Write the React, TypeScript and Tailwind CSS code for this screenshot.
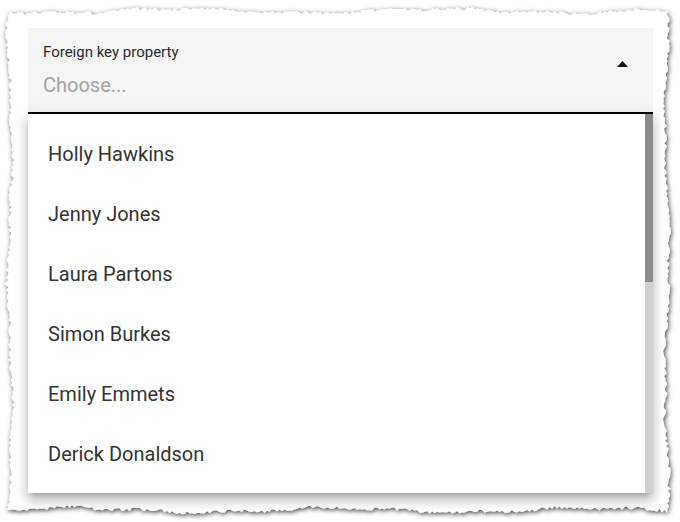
import { useMemo } from "react";

const people = [
  "Holly Hawkins",
  "Jenny Jones",
  "Laura Partons",
  "Simon Burkes",
  "Emily Emmets",
  "Derick Donaldson",
];

// seeded random so the torn edge is the same on every render
function makeRandom(seed: number) {
  let s = seed;
  return () => {
    s = (s * 16807) % 2147483647;
    return (s - 1) / 2147483646;
  };
}

function tornPath(left: number, top: number, right: number, bottom: number) {
  const rnd = makeRandom(42);
  const pts: string[] = [];
  const jit = (i: number, phase: number) =>
    Math.sin(i / 41 + phase) * 2.2 +
    Math.sin(i / 13 + phase * 2) * 1 +
    (rnd() - 0.5) * 3.4;

  for (let x = left; x <= right; x += 2.5) {
    pts.push(`${x.toFixed(1)},${(top + jit(x, 0.3)).toFixed(1)}`);
  }
  for (let y = top; y <= bottom; y += 2.5) {
    pts.push(`${(right + jit(y, 1.7)).toFixed(1)},${y.toFixed(1)}`);
  }
  for (let x = right; x >= left; x -= 2.5) {
    pts.push(`${x.toFixed(1)},${(bottom + jit(x, 2.9)).toFixed(1)}`);
  }
  for (let y = bottom; y >= top; y -= 2.5) {
    pts.push(`${(left + jit(y, 4.1)).toFixed(1)},${y.toFixed(1)}`);
  }
  return "M" + pts.join(" L") + " Z";
}

function TornPaper() {
  const d = useMemo(() => tornPath(10, 11, 667, 510), []);
  return (
    <svg
      className="absolute inset-0 pointer-events-none"
      width="680"
      height="522"
      viewBox="0 0 680 522"
    >
      <defs>
        <filter id="tornShadow" x="-5%" y="-5%" width="110%" height="110%">
          <feDropShadow dx="1" dy="1.5" stdDeviation="2.6" floodColor="#000" floodOpacity="0.75" />
        </filter>
      </defs>
      <path d={d} fill="#fff" filter="url(#tornShadow)" />
    </svg>
  );
}

export default function App() {
  return (
    <div
      className="relative w-[680px] h-[522px] overflow-hidden bg-white"
      style={{ fontFamily: "Roboto, 'Noto Sans', sans-serif" }}
    >
      <TornPaper />

      <div className="relative pt-[28px] pl-[28px] pr-[27px]">
        {/* select field */}
        <div className="flex bg-[#f5f5f5] border-b-2 border-black h-[86px]">
          <div className="flex-1 pl-[15px] pt-[16px]">
            <div className="text-[15px] leading-[17px] text-[#2a2a2a]">Foreign key property</div>
            <div className="mt-[12px] text-[20px] leading-[24px] text-[#a3a3a3]">Choose...</div>
          </div>
          <div className="pt-[33px] pr-[25px]">
            <svg width="11" height="6" viewBox="0 0 11 6">
              <path d="M0 6 L5.5 0 L11 6 Z" fill="#111" />
            </svg>
          </div>
        </div>

        {/* dropdown list */}
        <div className="flex h-[379px] bg-white shadow-[0_5px_5px_-3px_rgba(0,0,0,0.2),0_8px_10px_1px_rgba(0,0,0,0.14),0_3px_14px_2px_rgba(0,0,0,0.12)]">
          <ul className="flex-1 pt-[10px]">
            {people.map((name) => (
              <li
                key={name}
                className="h-[60px] pl-[20px] text-[20px] leading-[60px] text-[#333]"
              >
                {name}
              </li>
            ))}
          </ul>
          <div className="w-[8px] bg-[#cfcfcf]">
            <div className="h-[168px] bg-[#8a8a8a]" />
          </div>
        </div>
      </div>
    </div>
  );
}
